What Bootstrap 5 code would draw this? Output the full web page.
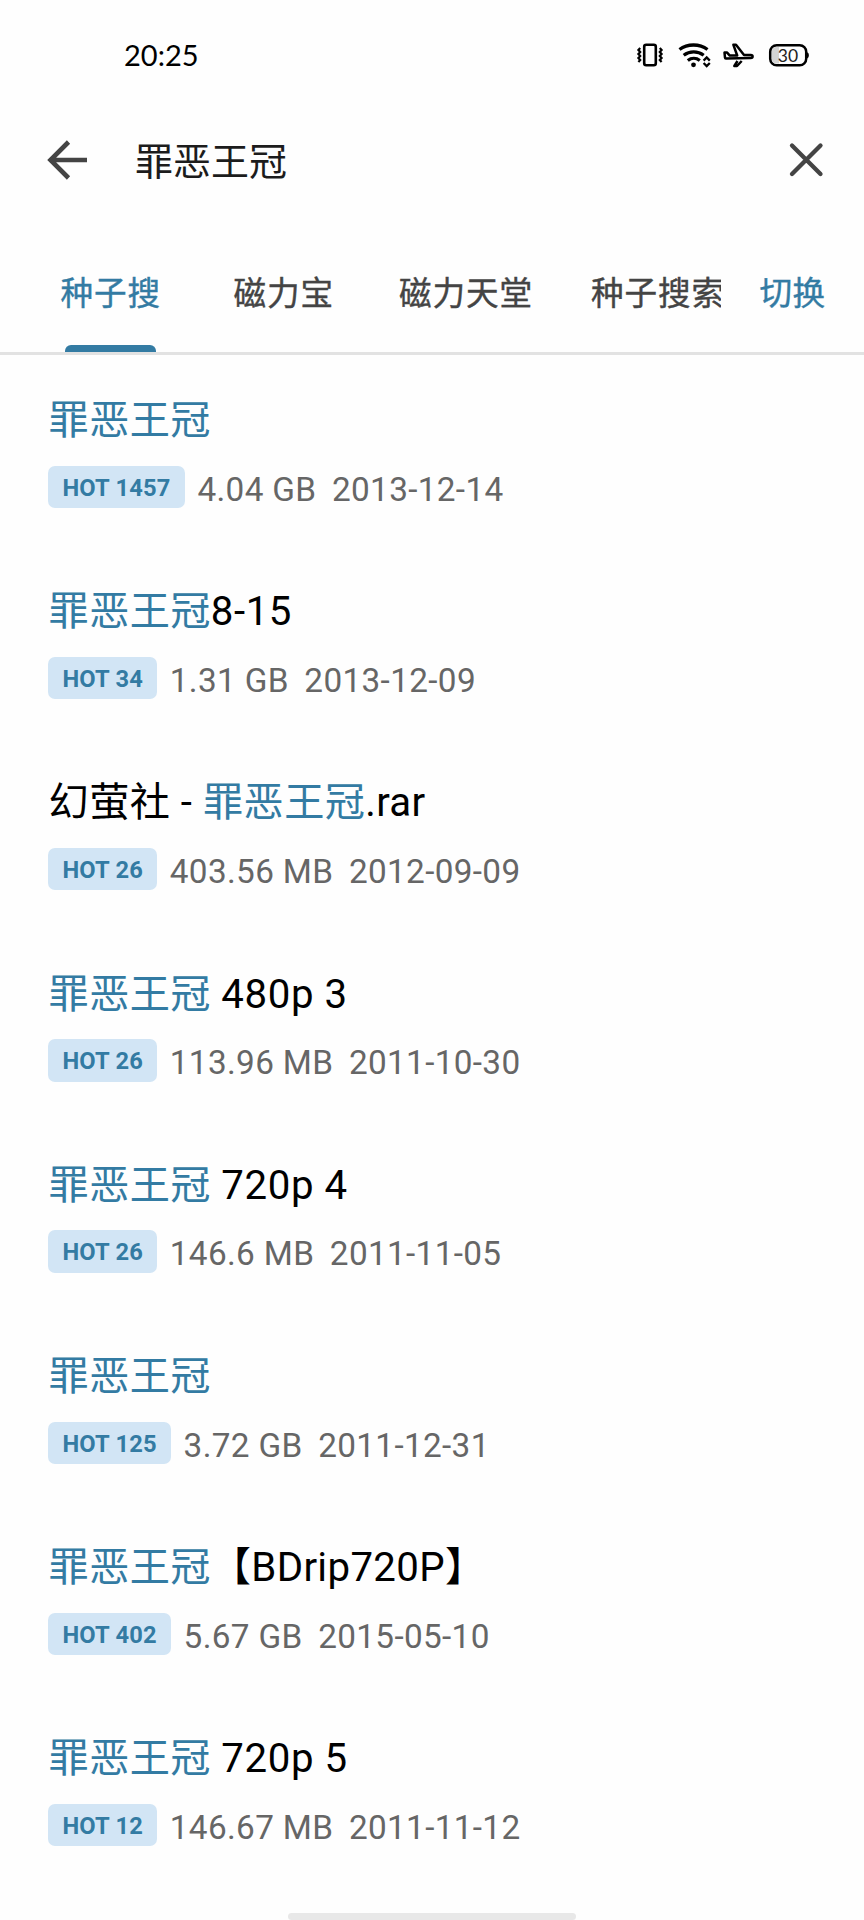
<!DOCTYPE html>
<html lang="zh-CN">
<head>
<meta charset="utf-8">
<meta name="viewport" content="width=device-width, initial-scale=1">
<title>罪恶王冠</title>
<link href="https://cdn.jsdelivr.net/npm/bootstrap@5.3.0/dist/css/bootstrap.min.css" rel="stylesheet">
<style>
  :root { --accent: #337ba3; }
  body { font-family: Roboto, "Noto Sans CJK SC", sans-serif; background: #fefefe; color: #000; height: 1920px; overflow: hidden; }
  .status { height: 110px; padding: 0 54px 0 124px; }
  .clock { font: 29px/1 Lato, sans-serif; padding-bottom: 2px; }
  .appbar { height: 102px; padding: 0 38px 0 46px; }
  .query { font-size: 38px; line-height: 1; color: #1c1c1c; margin-left: 47px; padding-top: 1px; }
  .tabs { height: 143px; border-bottom: 3px solid #e2e2e2; font-size: 32.6px; line-height: 1; letter-spacing: .9px; color: #444; -webkit-text-stroke: .4px currentColor; }
  .tab-strip { width: 721px; padding-left: 60.5px; }
  .tab-item { padding-top: 66px; white-space: nowrap; }
  .tab-item.on, .switcher { color: var(--accent); }
  .indicator { width: 91px; height: 7px; border-radius: 6px 6px 0 0; background: var(--accent); margin-left: 4.5px; }
  .switcher { padding: 66px 0 0 38.5px; letter-spacing: .4px; }
  .result { height: 191.2px; padding: 46px 48px 0 48.6px; }
  .title { font-size: 40.2px; line-height: 40px; letter-spacing: .35px; white-space: pre; }
  .title em { font-style: normal; color: var(--accent); }
  .title b { font-weight: 400; letter-spacing: .6px; }
  .info { margin: 24.6px 0 0 -.6px; height: 42.5px; font-size: 33.3px; line-height: 47.5px; letter-spacing: .35px; color: #666; }
  .hot { height: 42.5px; line-height: 45.5px; padding: 0 14.4px; border-radius: 7px; background: #d2e5f5; color: var(--accent); font-size: 23.7px; letter-spacing: .2px; font-weight: 700; margin-right: 12.4px; }
  .date { margin-left: 15.5px; }
  .homebar { left: 288px; top: 1913px; width: 288px; height: 7px; border-radius: 4px; background: #e8e8e8; }
</style>
</head>
<body class="position-relative">
<header>
  <div class="status d-flex align-items-center justify-content-between">
    <span class="clock">20:25</span>
    <svg width="176" height="30" viewBox="634 40 176 30" fill="none" stroke="#000" stroke-width="2.3">
      <rect x="644.2" y="44.8" width="11.600" height="20.4" rx="2" stroke-width="2.600"/>
      <path d="M640.2 48l-1.8 2 1.8 2-1.8 2 1.8 2-1.8 2 1.8 2-1.8 2M659.8 48l1.8 2-1.8 2 1.8 2-1.8 2 1.8 2-1.8 2 1.8 2" stroke-width="2.2"/>
      <path d="M679.5 49.5c8-6 20-6 28 0M683.7 55.2c6-4.5 14-4.5 20 0M687.8 60.5c3.6-2.8 8.400-2.8 12 0" stroke-width="3.3"/>
      <circle cx="693.5" cy="64.8" r="2.4" fill="#000" stroke="none"/>
      <path d="M703.6 60.6l3.1-3.1 3.1 3.1M703.6 63l3.1 3.1 3.1-3.1" stroke-width="2.3"/>
      <path d="M724.5 52.600l2.600 0 2.700 3 7.400-.1-3.800-10.700 2.600 0 8 10.300 6.800 0c2.400 0 2.400 3 0 3l-25 .5q-.7 0-.8-1zM737.500 61l-3.200 5 2.700 0 4.700-5" stroke-width="2.5" stroke-linejoin="round"/>
      <rect x="770.2" y="45.2" width="36" height="20" rx="6.5" stroke-width="2.5"/>
      <path d="M776 47h3v16.400h-3a4 4 0 0 1-4-4v-8.400a4 4 0 0 1 4-4z" fill="#d4d4d4" stroke="none"/>
      <path d="M807 52.200c2.500.6 2.500 5.500 0 6.100z" fill="#000" stroke="none"/>
      <text x="788" y="61.8" text-anchor="middle" font-family="Lato, sans-serif" font-size="17.5" fill="#222" stroke="none">30</text>
    </svg>
  </div>
  <div class="appbar d-flex align-items-center">
    <svg width="42" height="42" viewBox="0 0 42 42" fill="none" stroke="#444" stroke-width="4.6"><path d="M41 20H5M22.500 2L4.500 20l18 18"/></svg>
    <span class="query">罪恶王冠</span>
    <svg class="ms-auto" width="40" height="40" viewBox="0 0 40 40" stroke="#444" stroke-width="4.3" stroke-linecap="round"><path d="M6 4.500l28.500 28.500M34.500 4.500L6 33"/></svg>
  </div>
  <nav class="tabs d-flex">
    <div class="tab-strip d-flex overflow-hidden">
      <div class="tab-item on d-flex flex-column justify-content-between flex-shrink-0" style="width:173px"><span>种子搜</span><div class="indicator"></div></div>
      <div class="tab-item flex-shrink-0" style="width:165.5px">磁力宝</div>
      <div class="tab-item flex-shrink-0" style="width:192px">磁力天堂</div>
      <div class="tab-item flex-shrink-0">种子搜索</div>
    </div>
    <div class="switcher">切换</div>
  </nav>
</header>
<main>
  <article class="result"><div class="title"><em>罪恶王冠</em></div><div class="info d-flex"><span class="hot">HOT 1457</span><span>4.04 GB</span><span class="date">2013-12-14</span></div></article>
  <article class="result"><div class="title"><em>罪恶王冠</em><b>8-15</b></div><div class="info d-flex"><span class="hot">HOT 34</span><span>1.31 GB</span><span class="date">2013-12-09</span></div></article>
  <article class="result"><div class="title">幻萤社<b> - </b><em>罪恶王冠</em>.rar</div><div class="info d-flex"><span class="hot">HOT 26</span><span>403.56 MB</span><span class="date">2012-09-09</span></div></article>
  <article class="result"><div class="title"><em>罪恶王冠</em><b> 480p 3</b></div><div class="info d-flex"><span class="hot">HOT 26</span><span>113.96 MB</span><span class="date">2011-10-30</span></div></article>
  <article class="result"><div class="title"><em>罪恶王冠</em><b> 720p 4</b></div><div class="info d-flex"><span class="hot">HOT 26</span><span>146.6 MB</span><span class="date">2011-11-05</span></div></article>
  <article class="result"><div class="title"><em>罪恶王冠</em></div><div class="info d-flex"><span class="hot">HOT 125</span><span>3.72 GB</span><span class="date">2011-12-31</span></div></article>
  <article class="result"><div class="title"><em>罪恶王冠</em>【BDrip720P】</div><div class="info d-flex"><span class="hot">HOT 402</span><span>5.67 GB</span><span class="date">2015-05-10</span></div></article>
  <article class="result"><div class="title"><em>罪恶王冠</em><b> 720p 5</b></div><div class="info d-flex"><span class="hot">HOT 12</span><span>146.67 MB</span><span class="date">2011-11-12</span></div></article>
</main>
<div class="homebar position-absolute"></div>
<script src="https://cdn.jsdelivr.net/npm/bootstrap@5.3.0/dist/js/bootstrap.bundle.min.js"></script>
</body>
</html>
